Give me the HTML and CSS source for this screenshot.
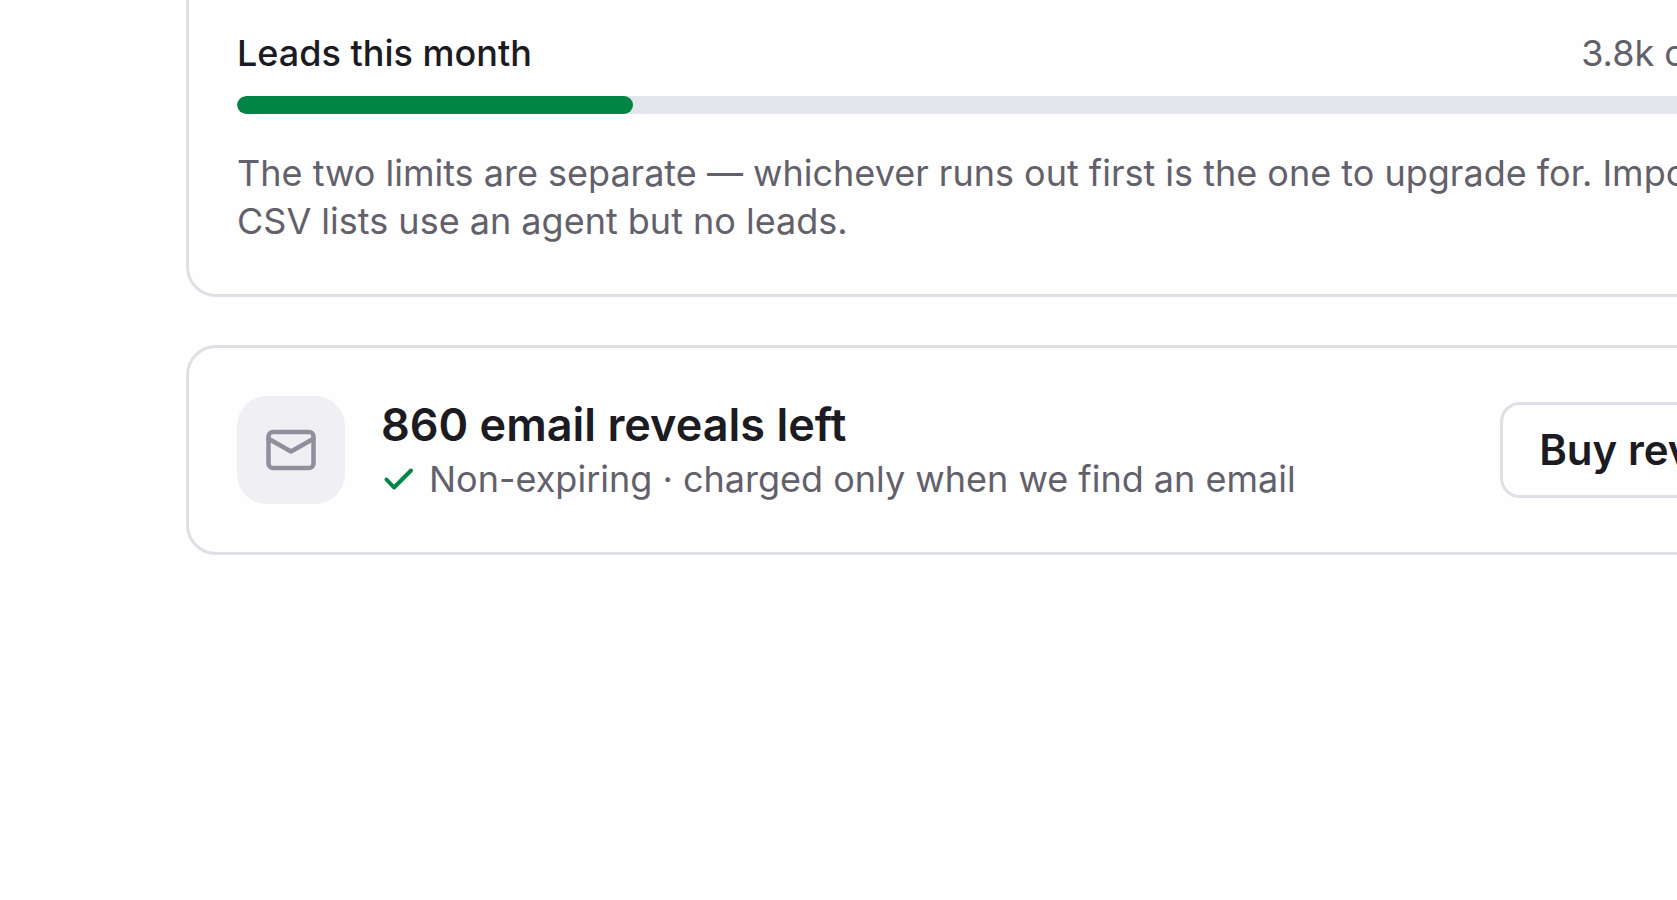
FILE: index.html
```html
<!DOCTYPE html>
<html lang="en">
<head>
  <meta charset="UTF-8">
  <title>Usage</title>
  <meta name="viewport" content="width=device-width, initial-scale=1.0">
  <link rel="stylesheet" href="styles.css">
</head>
<body>

<main class="panel">
  <section class="card usage">
    <div class="usage-head">
      <span class="usage-label" id="leadsLabel">Leads this month</span>
      <span class="usage-value">3.8k of 15000</span>
    </div>
    <div class="bar" role="progressbar" aria-labelledby="leadsLabel" aria-valuenow="3800" aria-valuemin="0" aria-valuemax="15000">
      <div class="bar-fill" style="width: 25.1%"></div>
    </div>
    <p class="note">The two limits are separate — whichever runs out first is the one to upgrade for. Imported CSV lists use an agent but no leads.</p>
  </section>

  <section class="card reveals">
    <div class="icon-box">
      <svg class="icon-mail" viewBox="0 0 24 24" aria-hidden="true">
        <rect x="2" y="4" width="20" height="16" rx="2"/>
        <path d="M2 7l10 5.7L22 7"/>
      </svg>
    </div>
    <div class="reveals-text">
      <h2>860 email reveals left</h2>
      <p>
        <svg class="icon-check" viewBox="0 0 36 36" aria-hidden="true">
          <path d="M5.5 18.5l7.5 8 17-17"/>
        </svg>
        <span>Non-expiring · charged only when we find an email</span>
      </p>
    </div>
    <button type="button" class="btn">Buy reveals</button>
  </section>
</main>

</body>
</html>
```
FILE: styles.css
```css
* { box-sizing: border-box; }
body {
  margin: 0;
  font-family: Inter, sans-serif;
  font-size: 36px;
  line-height: 48px;
  color: #1c1b22;
  background: #fefefe;
  overflow: hidden;
}
h2, p { margin: 0; }

/* the panel runs past the right edge of the window */
.panel {
  display: flex;
  flex-direction: column;
  gap: 48px;
  margin-left: 186px;
  margin-right: -188px;
}
.card {
  border: 3px solid #dfdfe6;
  border-radius: 30px;
  padding: 48px;
}

/* usage */
.usage {
  border-top: 0;
  border-top-left-radius: 0;
  border-top-right-radius: 0;
  padding-top: 29px;
  padding-bottom: 49px;
}
.usage-head {
  display: flex;
  justify-content: space-between;
}
.usage-label { font-weight: 500; }
.usage-value { color: #62616b; }
.bar {
  height: 18px;
  margin: 19px 0 35px;
  border-radius: 9px;
  background: #e5e5ed;
  overflow: hidden;
}
.bar-fill {
  height: 100%;
  border-radius: 9px;
  background: #008545;
}
.note { color: #62616b; }

/* email reveals */
.reveals {
  display: flex;
  align-items: center;
  gap: 36px;
}
.icon-box {
  display: flex;
  align-items: center;
  justify-content: center;
  width: 108px;
  height: 108px;
  border-radius: 30px;
  background: #f0eff4;
}
.icon-mail,
.icon-check {
  fill: none;
  stroke-linecap: round;
  stroke-linejoin: round;
}
.icon-mail {
  width: 54px;
  height: 54px;
  stroke: #918f9c;
  stroke-width: 2;
}
.icon-check {
  width: 36px;
  height: 36px;
  stroke: #008545;
  stroke-width: 4;
}
.reveals-text { flex: 1; }
.reveals-text h2 {
  font-size: 45px;
  font-weight: 600;
  line-height: 58px;
}
.reveals-text p {
  display: flex;
  align-items: center;
  gap: 12px;
  line-height: 50px;
  color: #62616b;
}
.btn {
  height: 96px;
  padding: 0 36px 2px;
  border: 3px solid #dfdfe6;
  border-radius: 20px;
  background: #fefefe;
  color: #1c1b22;
  font-family: inherit;
  font-size: 42px;
  font-weight: 600;
  white-space: nowrap;
  cursor: pointer;
}
```
